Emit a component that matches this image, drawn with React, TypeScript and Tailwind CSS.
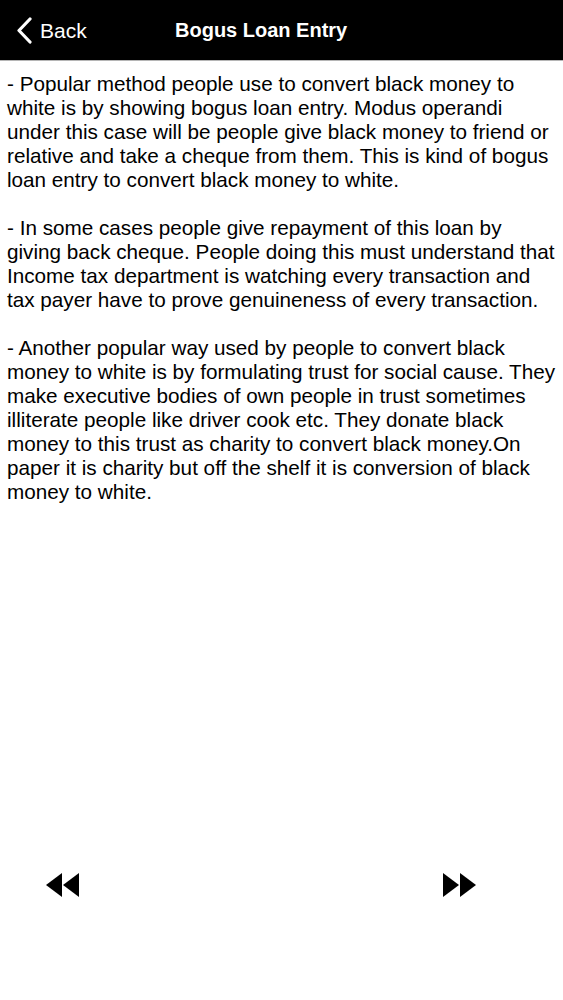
import React from "react";

const paragraphs = [
  "- Popular method people use to convert black money to white is by showing bogus loan entry. Modus operandi under this case will be people give black money to friend or relative and take a cheque from them. This is kind of bogus loan entry to convert black money to white.",
  "- In some cases people give repayment of this loan by giving back cheque. People doing this must understand that Income tax department is watching every transaction and tax payer have to prove genuineness of every transaction.",
  "- Another popular way used by people to convert black money to white is by formulating trust for social cause. They make executive bodies of own people in trust sometimes illiterate people like driver cook etc. They donate black money to this trust as charity to convert black money.On paper it is charity but off the shelf it is conversion of black money to white.",
];

export default function App() {
  return (
    <div className="w-[563px] h-[1000px] bg-white flex flex-col font-['Liberation_Sans',Arial,sans-serif] text-black">
      <header className="h-[61px] bg-black border-b border-[#b5b5b5] flex items-center px-[16px] shrink-0">
        <button className="w-[159px] h-full flex items-center gap-[8px] text-white">
          <svg width="16" height="27" viewBox="0 0 16 27" fill="none">
            <path d="M14 2 L3 13.5 L14 25" stroke="white" strokeWidth="3.2" strokeLinecap="round" strokeLinejoin="round" />
          </svg>
          <span className="text-[21px] leading-none">Back</span>
        </button>
        <h1 className="text-white text-[20px] font-bold">Bogus Loan Entry</h1>
      </header>
      <main className="flex-1 pl-[7px] pr-[5px] pt-[11px] flex flex-col gap-[24px]">
        {paragraphs.map((p, i) => (
          <p key={i} className="text-[20.7px] leading-[24px]">{p}</p>
        ))}
      </main>
      <footer className="h-[127px] shrink-0 flex items-start justify-between pl-[46px] pr-[87px]">
        <svg width="33" height="24" viewBox="0 0 33 24">
          <path d="M16 0 L0 12 L16 24 Z" fill="black" />
          <path d="M33 0 L17 12 L33 24 Z" fill="black" />
        </svg>
        <svg width="33" height="24" viewBox="0 0 33 24">
          <path d="M0 0 L16 12 L0 24 Z" fill="black" />
          <path d="M17 0 L33 12 L17 24 Z" fill="black" />
        </svg>
      </footer>
    </div>
  );
}
